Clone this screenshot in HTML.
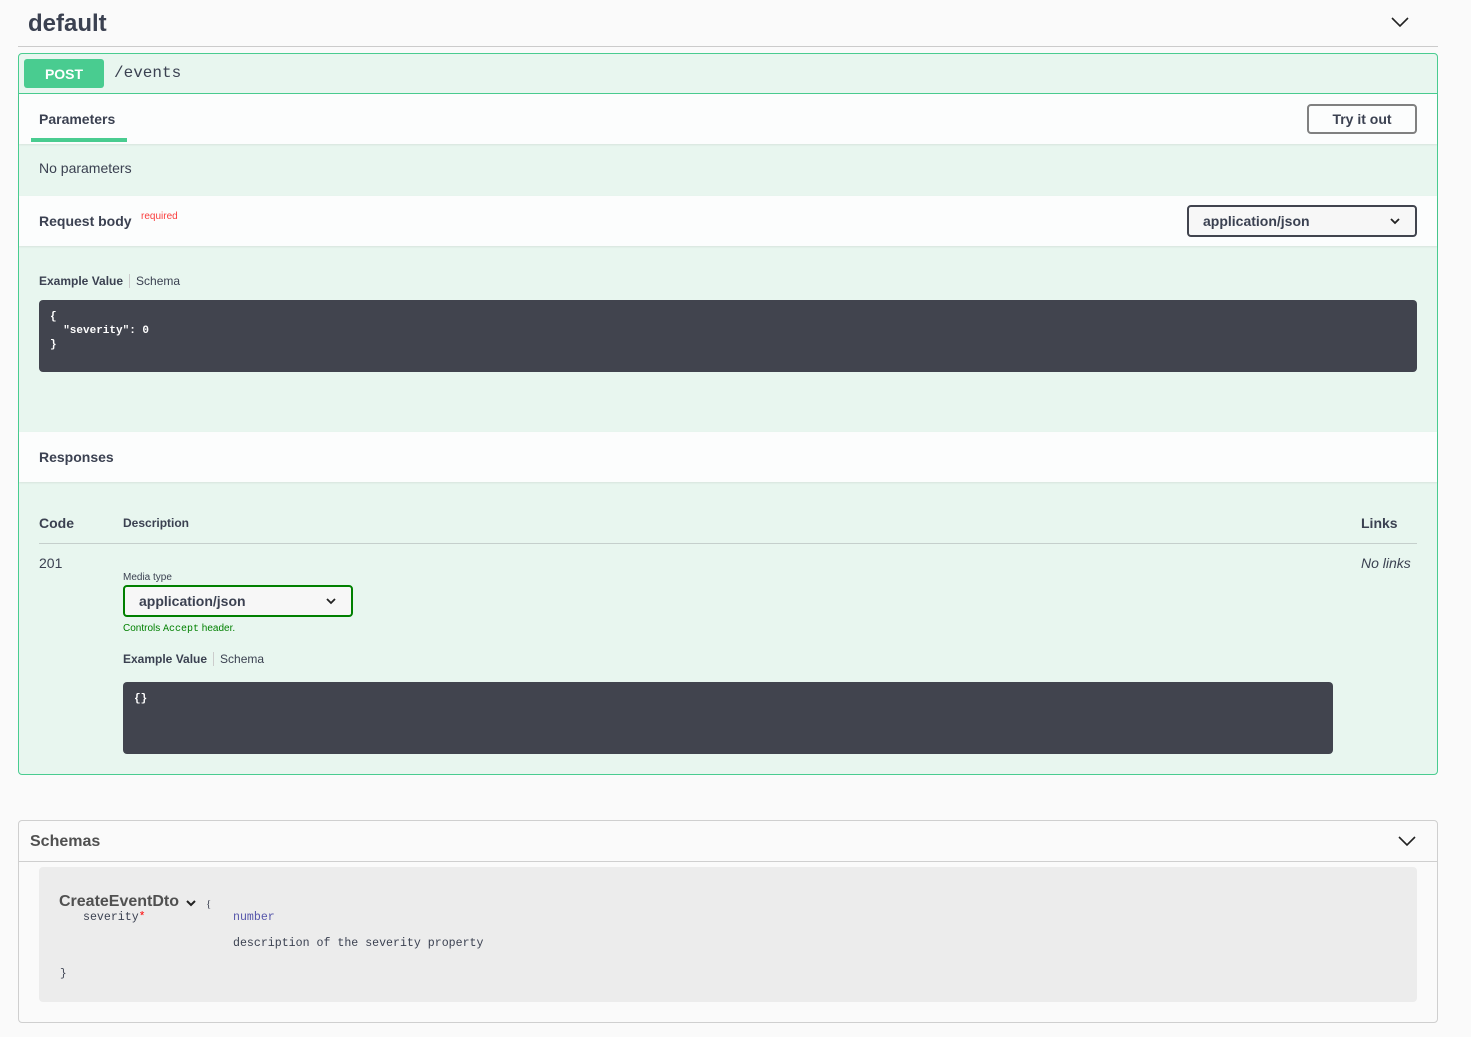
<!DOCTYPE html>
<html><head><meta charset="utf-8"><style>
*{box-sizing:border-box;margin:0;padding:0}
body{width:1471px;height:1037px;background:#fafafa;font-family:"Liberation Sans",sans-serif;color:#3b4151;position:relative;overflow:hidden}
.a{position:absolute}
.b{font-weight:bold}
.mono{font-family:"Liberation Mono",monospace}
.code{background:#41444e;border-radius:4px;color:#fff;font-family:"Liberation Mono",monospace;font-size:11px;font-weight:bold;padding:10px 11px;line-height:14px}
.sel{border-radius:4px;background:#f7f7f7;font-weight:bold;font-size:14px;padding-left:14px;line-height:27px}
</style></head><body>
<div class="a b" style="left:28px;top:10px;font-size:24px">default</div>
<svg class="a" style="left:1390px;top:15px" width="20" height="14" viewBox="0 0 20 14"><path d="M2 3l8 8 8-8" fill="none" stroke="#222" stroke-width="1.6"/></svg>
<div class="a" style="left:18px;top:46px;width:1420px;height:1px;background:#cbcbcb"></div>

<div class="a" style="left:18px;top:53px;width:1420px;height:722px;border:1px solid #49cc90;border-radius:4px;background:#e8f6ef"></div>
<div class="a" style="left:19px;top:93px;width:1418px;height:1px;background:#49cc90"></div>
<div class="a b" style="left:24px;top:59px;width:80px;height:29px;background:#49cc90;border-radius:3px;color:#fff;font-size:14px;text-align:center;line-height:30px">POST</div>
<div class="a mono" style="left:114px;top:64px;font-size:16px;color:#3b4151">/events</div>

<div class="a" style="left:19px;top:94px;width:1418px;height:50px;background:#fcfdfd;box-shadow:0 1px 2px rgba(0,0,0,.08)"></div>
<div class="a b" style="left:39px;top:111px;font-size:14px">Parameters</div>
<div class="a" style="left:31px;top:138px;width:96px;height:4px;background:#49cc90"></div>
<div class="a b" style="left:1307px;top:104px;width:110px;height:30px;border:2px solid #808080;border-radius:4px;font-size:14px;text-align:center;line-height:27px">Try it out</div>

<div class="a" style="left:39px;top:160px;font-size:14px">No parameters</div>

<div class="a" style="left:19px;top:196px;width:1418px;height:50px;background:#fcfdfd;box-shadow:0 1px 2px rgba(0,0,0,.08)"></div>
<div class="a b" style="left:39px;top:213px;font-size:14px">Request body</div>
<div class="a" style="left:141px;top:211px;font-size:10px;color:#f93e3e">required</div>
<div class="a sel" style="left:1187px;top:205px;width:230px;height:32px;border:2px solid #41444e;line-height:28px">application/json</div>
<svg class="a" style="left:1389px;top:216px" width="12" height="10" viewBox="0 0 12 10"><path d="M2 3l4 4 4-4" fill="none" stroke="#222" stroke-width="1.8"/></svg>

<div class="a" style="left:39px;top:274px;font-size:12px"><b>Example Value</b><span style="display:inline-block;width:1px;height:14px;background:#ccc;margin:0 6px -3px 6px"></span>Schema</div>
<div class="a code" style="left:39px;top:300px;width:1378px;height:72px">{<br>&nbsp;&nbsp;"severity": 0<br>}</div>

<div class="a" style="left:19px;top:432px;width:1418px;height:50px;background:#fcfdfd;box-shadow:0 1px 2px rgba(0,0,0,.08)"></div>
<div class="a b" style="left:39px;top:449px;font-size:14px">Responses</div>

<div class="a b" style="left:39px;top:515px;font-size:14px">Code</div>
<div class="a b" style="left:123px;top:516px;font-size:12px">Description</div>
<div class="a b" style="left:1361px;top:515px;font-size:14px">Links</div>
<div class="a" style="left:39px;top:543px;width:1378px;height:1px;background:#c5cfcc"></div>
<div class="a" style="left:39px;top:555px;font-size:14px">201</div>
<div class="a" style="left:1361px;top:555px;font-size:14px;font-style:italic">No links</div>
<div class="a" style="left:123px;top:572px;font-size:10px">Media type</div>
<div class="a sel" style="left:123px;top:585px;width:230px;height:32px;border:2px solid #008000;color:#3b4151;line-height:28px">application/json</div>
<svg class="a" style="left:325px;top:596px" width="12" height="10" viewBox="0 0 12 10"><path d="M2 3l4 4 4-4" fill="none" stroke="#222" stroke-width="1.8"/></svg>
<div class="a" style="left:123px;top:623px;font-size:10px;color:#008000">Controls <span class="mono">Accept</span> header.</div>
<div class="a" style="left:123px;top:652px;font-size:12px"><b>Example Value</b><span style="display:inline-block;width:1px;height:14px;background:#ccc;margin:0 6px -3px 6px"></span>Schema</div>
<div class="a code" style="left:123px;top:682px;width:1210px;height:72px">{}</div>

<div class="a" style="left:18px;top:820px;width:1420px;height:203px;border:1px solid #cfcfcf;border-radius:4px"></div>
<div class="a" style="left:19px;top:861px;width:1418px;height:1px;background:#cfcfcf"></div>
<div class="a b" style="left:30px;top:833px;font-size:16px;color:#505050">Schemas</div>
<svg class="a" style="left:1397px;top:834px" width="20" height="14" viewBox="0 0 20 14"><path d="M2 3l8 8 8-8" fill="none" stroke="#222" stroke-width="1.6"/></svg>
<div class="a" style="left:39px;top:867px;width:1378px;height:135px;background:#ececec;border-radius:4px"></div>
<div class="a b" style="left:59px;top:893px;font-size:16px;color:#505050">CreateEventDto</div>
<svg class="a" style="left:185px;top:898px" width="12" height="10" viewBox="0 0 12 10"><path d="M2 3l4 4 4-4" fill="none" stroke="#222" stroke-width="2"/></svg>
<div class="a" style="left:206px;top:898px;font-size:11px;font-family:'Liberation Serif',serif">{</div>
<div class="a mono" style="left:83px;top:911px;font-size:11.6px">severity<span style="color:#f00">*</span></div>
<div class="a mono" style="left:233px;top:911px;font-size:11.6px;color:#55a">number</div>
<div class="a mono" style="left:233px;top:937px;font-size:11.6px">description of the severity property</div>
<div class="a mono" style="left:60px;top:968px;font-size:11px">}</div>
</body></html>
